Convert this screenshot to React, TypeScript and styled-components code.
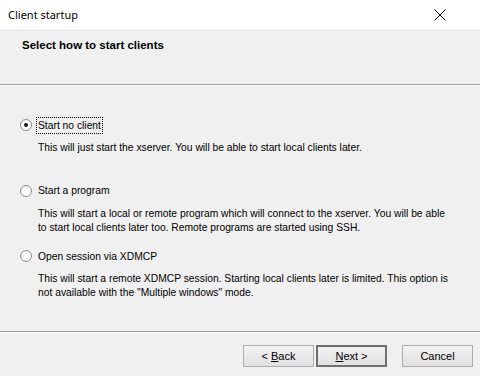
import React from 'react';
import styled, { createGlobalStyle } from 'styled-components';

const GlobalStyle = createGlobalStyle`
  html, body {
    margin: 0;
    padding: 0;
    background: #f0f0f0;
  }
  #root {
    width: 480px;
    height: 376px;
    overflow: hidden;
  }
`;

const options = [
  {
    label: 'Start no client',
    checked: true,
    lines: ['This will just start the xserver. You will be able to start local clients later.'],
  },
  {
    label: 'Start a program',
    checked: false,
    lines: [
      'This will start a local or remote program which will connect to the xserver. You will be able',
      'to start local clients later too. Remote programs are started using SSH.',
    ],
  },
  {
    label: 'Open session via XDMCP',
    checked: false,
    lines: [
      'This will start a remote XDMCP session. Starting local clients later is limited. This option is',
      'not available with the "Multiple windows" mode.',
    ],
  },
];

export default function App() {
  return (
    <>
      <GlobalStyle />
      <Window>
        <TitleBar>
          <TitleText>Client startup</TitleText>
          <CloseButton>
            <svg width="12" height="12" viewBox="0 0 12 12">
              <path d="M0.5 0.5 L11.5 11.5 M11.5 0.5 L0.5 11.5" stroke="#000" strokeWidth="1" />
            </svg>
          </CloseButton>
        </TitleBar>

        <Header>
          <HeaderTitle>Select how to start clients</HeaderTitle>
        </Header>
        <Etched />

        <Body>
          {options.map((opt) => (
            <Option key={opt.label}>
              <RadioRow>
                <Radio $checked={opt.checked} />
                <RadioLabel $focused={opt.checked}>{opt.label}</RadioLabel>
              </RadioRow>
              <Description>
                {opt.lines.map((l) => (
                  <div key={l}>{l}</div>
                ))}
              </Description>
            </Option>
          ))}
        </Body>

        <Etched />
        <Footer>
          <Button>
            <span>
              &lt; <u>B</u>ack
            </span>
          </Button>
          <Button $default>
            <span>
              <u>N</u>ext &gt;
            </span>
          </Button>
          <ButtonGap />
          <Button>
            <span>Cancel</span>
          </Button>
        </Footer>
      </Window>
    </>
  );
}

const Window = styled.div`
  width: 480px;
  height: 376px;
  display: flex;
  flex-direction: column;
  background: #f0f0f0;
  font-family: 'Liberation Sans', Arial, sans-serif;
  font-size: 10.3px;
  color: #000;
`;

const TitleBar = styled.div`
  height: 29px;
  background: #fff;
  display: flex;
  align-items: center;
  justify-content: space-between;
  padding: 0 34px 0 8px;
  flex-shrink: 0;
`;

const TitleText = styled.div`
  font-family: 'Noto Sans', 'Open Sans', sans-serif;
  font-size: 11px;
  color: #000;
`;

const CloseButton = styled.div`
  width: 12px;
  height: 12px;
  display: flex;
`;

const Header = styled.div`
  height: 55px;
  padding: 10px 0 0 22px;
  box-sizing: border-box;
  background: #f0f0f0;
  flex-shrink: 0;
`;

const HeaderTitle = styled.div`
  font-weight: bold;
  font-size: 11.5px;
`;

const Etched = styled.div`
  height: 1px;
  background: #a0a0a0;
  border-bottom: 1px solid #fff;
  flex-shrink: 0;
`;

const Body = styled.div`
  height: 245px;
  flex-shrink: 0;
  box-sizing: border-box;
  padding: 31px 0 0 20px;
  display: flex;
  flex-direction: column;
`;

const Option = styled.div`
  height: 65.5px;
  display: flex;
  flex-direction: column;
  gap: 8px;
  flex-shrink: 0;
`;

const RadioRow = styled.div`
  display: flex;
  align-items: center;
  gap: 5px;
  height: 16px;
`;

const Radio = styled.div<{ $checked?: boolean }>`
  width: 12px;
  height: 12px;
  border-radius: 50%;
  box-sizing: border-box;
  border: 1px solid #8f8f8f;
  background: radial-gradient(circle at 60% 60%, #ffffff 40%, #e3e3e3 100%);
  display: flex;
  align-items: center;
  justify-content: center;

  &::after {
    content: '';
    width: 4px;
    height: 4px;
    border-radius: 50%;
    background: ${(p) => (p.$checked ? '#1a1a1a' : 'transparent')};
  }
`;

const RadioLabel = styled.span<{ $focused?: boolean }>`
  padding: 1px 1px;
  outline: ${(p) => (p.$focused ? '1px dotted #000' : 'none')};
  line-height: 13px;
`;

const Description = styled.div`
  padding-left: 18px;
  line-height: 14px;
`;

const Footer = styled.div`
  flex: 1;
  display: flex;
  align-items: flex-start;
  padding: 12px 0 0 243px;
  box-sizing: border-box;
  gap: 2px;
`;

const ButtonGap = styled.div`
  width: 11px;
`;

const Button = styled.div<{ $default?: boolean }>`
  width: 71px;
  height: 22px;
  box-sizing: border-box;
  display: flex;
  align-items: center;
  justify-content: center;
  background: linear-gradient(#f2f2f2, #e1e1e1);
  border: ${(p) => (p.$default ? '2px solid #707070' : '1px solid #adadad')};
  font-size: 11px;
  white-space: pre;
`;
